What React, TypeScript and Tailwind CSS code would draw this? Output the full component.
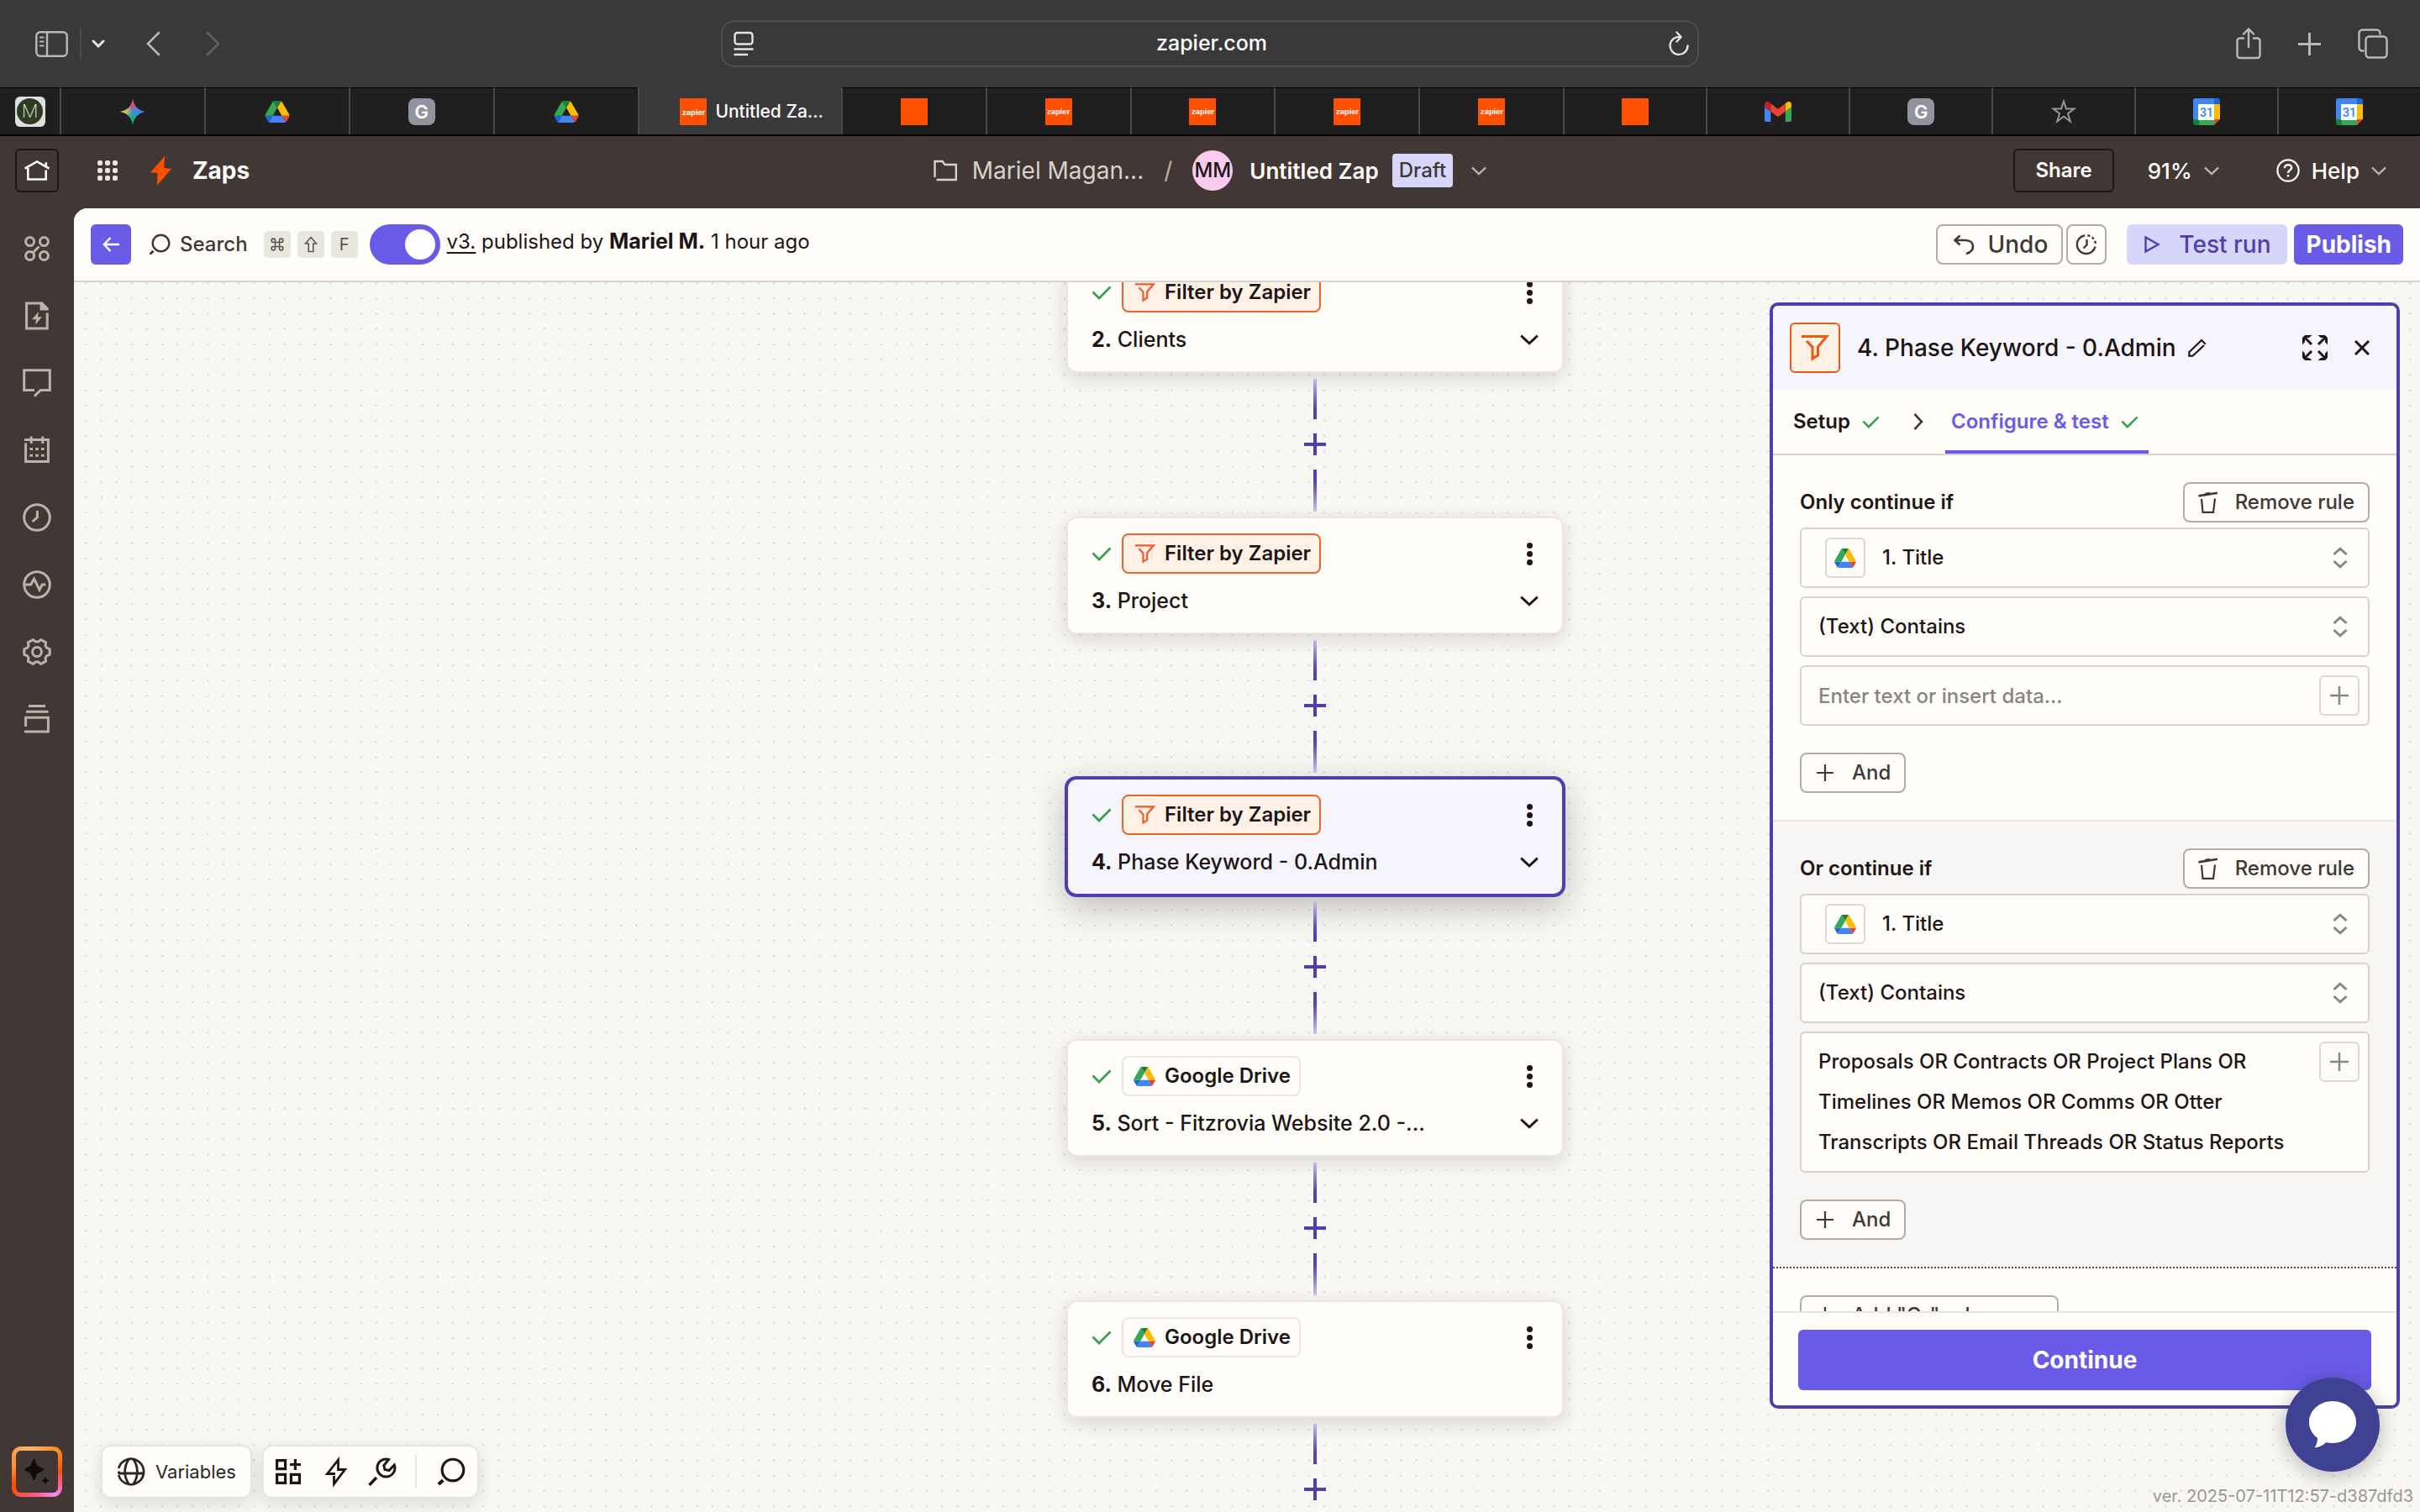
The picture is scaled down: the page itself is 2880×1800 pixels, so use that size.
import React from "react";

type IconProps = { className?: string };

/* ---------- icons ---------- */

const stroke = {
  fill: "none",
  stroke: "currentColor",
  strokeLinecap: "butt" as const,
  strokeLinejoin: "miter" as const,
};

function DriveIcon({ className = "" }: IconProps) {
  return (
    <svg viewBox="0 0 87.3 78" className={className} aria-hidden="true">
      <path d="m6.6 66.85 3.85 6.65c.8 1.4 1.95 2.5 3.3 3.3l13.75-23.8h-27.5c0 1.55.4 3.1 1.2 4.5z" fill="#1c67d6" />
      <path d="m43.65 25-13.75-23.8c-1.35.8-2.5 1.9-3.3 3.3l-25.4 44a9.06 9.06 0 0 0 -1.2 4.5h27.5z" fill="#34a853" />
      <path d="m73.55 76.8c1.35-.8 2.5-1.9 3.3-3.3l1.6-2.75 7.65-13.25c.8-1.4 1.2-2.95 1.2-4.5h-27.502l5.852 11.5z" fill="#ea4335" />
      <path d="m43.65 25 13.75-23.8c-1.35-.8-2.9-1.2-4.5-1.2h-18.5c-1.6 0-3.15.45-4.5 1.2z" fill="#188038" />
      <path d="m59.8 53h-32.3l-13.75 23.8c1.35.8 2.9 1.2 4.5 1.2h50.8c1.6 0 3.15-.45 4.5-1.2z" fill="#4285f4" />
      <path d="m73.4 26.5-12.7-22c-.8-1.4-1.95-2.5-3.3-3.3l-13.75 23.8 16.15 28h27.45c0-1.55-.4-3.1-1.2-4.5z" fill="#fbbc04" />
    </svg>
  );
}

function GmailIcon() {
  return (
    <svg viewBox="52 42 88 66" className="h-6 w-8" aria-hidden="true">
      <path fill="#4285f4" d="M58 108h14V74L52 59v43c0 3.32 2.69 6 6 6" />
      <path fill="#34a853" d="M120 108h14c3.32 0 6-2.69 6-6V59l-20 15" />
      <path fill="#fbbc04" d="M120 48v26l20-15v-8c0-7.42-8.47-11.65-14.4-7.2" />
      <path fill="#ea4335" d="M72 74V48l24 18 24-18v26L96 92" />
      <path fill="#c5221f" d="M52 51v8l20 15V48l-5.6-4.2c-5.94-4.45-14.4-.22-14.4 7.2" />
    </svg>
  );
}

function GeminiIcon() {
  return (
    <svg viewBox="0 0 30 30" className="size-[30px]" aria-hidden="true">
      <defs>
        <radialGradient id="gemTop" cx="0.5" cy="0" r="0.5">
          <stop offset="0" stopColor="#f0484a" />
          <stop offset="0.5" stopColor="#f0484a" stopOpacity="0.9" />
          <stop offset="1" stopColor="#f0484a" stopOpacity="0" />
        </radialGradient>
        <radialGradient id="gemLeft" cx="0" cy="0.5" r="0.5">
          <stop offset="0" stopColor="#fbc02d" />
          <stop offset="0.5" stopColor="#fbc02d" stopOpacity="0.9" />
          <stop offset="1" stopColor="#fbc02d" stopOpacity="0" />
        </radialGradient>
        <radialGradient id="gemBottom" cx="0.45" cy="1" r="0.55">
          <stop offset="0" stopColor="#12b868" />
          <stop offset="0.5" stopColor="#12b868" stopOpacity="0.9" />
          <stop offset="1" stopColor="#12b868" stopOpacity="0" />
        </radialGradient>
      </defs>
      {["#3a86ff", "url(#gemTop)", "url(#gemLeft)", "url(#gemBottom)"].map((fill) => (
        <path key={fill} fill={fill} d="M15 0C16.5 8.500 21.500 13.500 30 15C21.500 16.500 16.500 21.500 15 30C13.500 21.500 8.500 16.500 0 15C8.500 13.500 13.500 8.500 15 0Z" />
      ))}
    </svg>
  );
}

function GoogleCalendarIcon() {
  return (
    <svg viewBox="0 0 32 32" className="size-8" aria-hidden="true">
      <path fill="#4285f4" d="M3 0H25V7H7V26H0V3A3 3 0 0 1 3 0Z" />
      <path fill="#1967d2" d="M25 0H29A3 3 0 0 1 32 3V7H25Z" />
      <path fill="#fbbc04" d="M25 7H32V25H25Z" />
      <path fill="#34a853" d="M7 25H25V32H7Z" />
      <path fill="#188038" d="M0 25H7V32H3A3 3 0 0 1 0 29Z" />
      <path fill="#ea4335" d="M25 25H32L25 32Z" />
      <path fill="#fff" d="M6 7H25V26H6Z" />
      <text x="16" y="22" textAnchor="middle" fontSize="14" fontWeight="600" fill="#4285f4" fontFamily="Roboto, sans-serif">
        31
      </text>
    </svg>
  );
}

function ZapierFavicon({ plain = false }: { plain?: boolean }) {
  return (
    <span className="flex size-8 shrink-0 items-center justify-center bg-[#ff4f00] text-[9px] font-bold leading-none text-white">
      {plain ? "" : "zapier"}
    </span>
  );
}

function GFavicon() {
  return (
    <span className="flex size-8 items-center justify-center rounded-lg bg-[#93939f] text-[22px] font-semibold leading-none text-white">
      G
    </span>
  );
}

function StarIcon() {
  return (
    <svg viewBox="0 0 30 30" className="size-[30px] text-[#98989a]" aria-hidden="true">
      <path {...stroke} strokeWidth="2" d="M15 2.5L18 11.5H27.5L20 17.2L22.8 26.5L15 20.8L7.2 26.5L10 17.2L2.5 11.5H12Z" />
    </svg>
  );
}

function FunnelIcon({ className = "" }: IconProps) {
  return (
    <svg viewBox="0 0 33 31" className={className} aria-hidden="true">
      <path {...stroke} strokeWidth="3" d="M0 1.5H30L19.5 13.7V24L13 28V14L6 7" />
    </svg>
  );
}

function CheckIcon({ className = "" }: IconProps) {
  return (
    <svg viewBox="0 0 24 17" className={className} aria-hidden="true">
      <path {...stroke} strokeWidth="2.8" d="M1.5 7.5L9 15L22.5 1.5" />
    </svg>
  );
}

function ChevronDown({ className = "" }: IconProps) {
  return (
    <svg viewBox="0 0 20 12" className={className} aria-hidden="true">
      <path {...stroke} strokeWidth="2.6" d="M1 1.5L10 10L19 1.5" />
    </svg>
  );
}

function PlusIcon({ className = "" }: IconProps) {
  return (
    <svg viewBox="0 0 20 20" className={className} aria-hidden="true">
      <path {...stroke} strokeWidth="2.2" d="M10 0V20M0 10H20" />
    </svg>
  );
}

function SearchIcon({ className = "" }: IconProps) {
  return (
    <svg viewBox="0 0 26 26" className={className} aria-hidden="true">
      <circle {...stroke} strokeWidth="2.4" cx="14.5" cy="11.5" r="9.8" />
      <path {...stroke} strokeWidth="3" d="M1.5 24.5L5.5 20.8" />
    </svg>
  );
}

function SortIcon() {
  return (
    <svg viewBox="0 0 18 26" className="h-[26px] w-[18px] shrink-0 text-[#88857f]" aria-hidden="true">
      <path {...stroke} strokeWidth="3" d="M1.5 9L9 2.2L16.5 9M1.5 17L9 23.8L16.5 17" />
    </svg>
  );
}

function TrashIcon() {
  return (
    <svg viewBox="0 0 24 27" className="h-[27px] w-6" aria-hidden="true">
      <path {...stroke} strokeWidth="2.2" d="M4 9L5.5 24.8H18L20 8.5" />
      <path {...stroke} strokeWidth="2.6" d="M.5 5.4L23 1.8" />
      <path {...stroke} strokeWidth="2" d="M8 3L14 1.6" />
    </svg>
  );
}

function HomeIcon() {
  return (
    <svg viewBox="0 0 30 26" className="h-[26px] w-[30px]" aria-hidden="true">
      <path {...stroke} strokeWidth="2.6" d="M.5 10.5L15 2.4L29.5 10.5M25.8 9V3.2M4.3 10V23.5H25.7V12.5" />
    </svg>
  );
}

function gearPath() {
  const points: string[] = [];
  for (let i = 0; i < 6; i++) {
    const base = i * 60;
    for (const [angle, radius] of [
      [base - 13, 15.6],
      [base + 13, 15.6],
      [base + 22, 12.6],
      [base + 38, 12.6],
    ]) {
      const rad = (angle * Math.PI) / 180;
      points.push(`${(18 + radius * Math.cos(rad)).toFixed(2)} ${(18 + radius * Math.sin(rad) * 0.97).toFixed(2)}`);
    }
  }
  return `M${points.join("L")}Z`;
}

/* ---------- browser chrome ---------- */

function BrowserBar() {
  return (
    <div className="grid h-26 shrink-0 grid-cols-[1fr_1164px_1fr] items-center bg-[#393939] text-[#b9b9b9]">
      <div className="flex items-center pl-[42px]">
        <button aria-label="Show sidebar">
          <svg viewBox="0 0 39 31" className="h-[31px] w-[39px]" aria-hidden="true">
            <rect {...stroke} strokeWidth="2.4" x="1.3" y="1.3" width="36.4" height="28.4" rx="4.5" />
            <path {...stroke} strokeWidth="2.4" d="M14 1V30" />
            <path {...stroke} strokeWidth="1.8" d="M5 7.5H10.5M5 12.5H10.5M5 17.5H10.5" />
          </svg>
        </button>
        <span className="ml-3.5 h-9 w-0.5 bg-[#4c4c4c]" />
        <button aria-label="Tab groups" className="ml-3 text-[#e2e2e2]">
          <svg viewBox="0 0 16 10" className="h-2.5 w-4" aria-hidden="true">
            <path {...stroke} strokeWidth="3" strokeLinecap="round" d="M2 2L8 8L14 2" />
          </svg>
        </button>
        <button aria-label="Back" className="ml-12">
          <svg viewBox="0 0 18 30" className="h-[30px] w-[18px]" aria-hidden="true">
            <path {...stroke} strokeWidth="2.6" strokeLinecap="round" d="M16 2L3 15L16 28" />
          </svg>
        </button>
        <button aria-label="Forward" className="ml-[54px] text-[#626262]">
          <svg viewBox="0 0 18 30" className="h-[30px] w-[18px]" aria-hidden="true">
            <path {...stroke} strokeWidth="2.6" strokeLinecap="round" d="M2 2L15 15L2 28" />
          </svg>
        </button>
      </div>
      <div className="flex h-14 items-center rounded-2xl border-2 border-[#505050] pr-2.5 pl-3 text-[#e4e4e4]">
        <button aria-label="Page menu">
          <svg viewBox="0 0 26 30" className="h-[30px] w-[26px]" aria-hidden="true">
            <rect {...stroke} strokeWidth="2.4" x="2.5" y="2" width="21" height="13.5" rx="3" />
            <path {...stroke} strokeWidth="2.4" d="M1.5 21.5H24.5M1.5 28H18" />
          </svg>
        </button>
        <input
          aria-label="Address"
          defaultValue="zapier.com"
          className="min-w-0 flex-1 bg-transparent text-center text-[25px] font-medium text-white outline-none"
        />
        <button aria-label="Reload">
          <svg viewBox="0 0 24 30" className="h-[30px] w-6" aria-hidden="true">
            <path {...stroke} strokeWidth="2.4" strokeLinecap="round" d="M13.5 7A10.5 10.5 0 1 0 22.5 17.5M9.5 1.5L14.5 7L9.5 12.5" />
          </svg>
        </button>
      </div>
      <div className="flex items-center justify-end gap-11 pr-[38px]">
        <button aria-label="Share page">
          <svg viewBox="0 0 30 38" className="h-[38px] w-[30px]" aria-hidden="true">
            <path {...stroke} strokeWidth="2.4" strokeLinecap="round" d="M9 12.5H4.5A3 3 0 0 0 1.5 15.5V33A3 3 0 0 0 4.5 36H25.5A3 3 0 0 0 28.5 33V15.5A3 3 0 0 0 25.5 12.5H21M15 23V2M9 7.5L15 1.5L21 7.5" />
          </svg>
        </button>
        <button aria-label="New tab">
          <PlusIcon className="size-[27px]" />
        </button>
        <button aria-label="Tab overview">
          <svg viewBox="0 0 36 36" className="size-9" aria-hidden="true">
            <rect {...stroke} strokeWidth="2.4" x="9.5" y="9.5" width="25" height="25" rx="4" />
            <path {...stroke} strokeWidth="2.4" d="M7.5 26.5H5.5A4 4 0 0 1 1.5 22.5V5.5A4 4 0 0 1 5.5 1.5H22.5A4 4 0 0 1 26.5 5.5V7.5" />
          </svg>
        </button>
      </div>
    </div>
  );
}

type Tab = { name: string; icon: React.ReactNode; narrow?: boolean };

const tabs: Tab[] = [
  { name: "Gemini", icon: <GeminiIcon /> },
  { name: "Drive", icon: <DriveIcon className="h-[26px] w-[30px]" /> },
  { name: "G page", icon: <GFavicon /> },
  { name: "Drive folder", icon: <DriveIcon className="h-[26px] w-[30px]" /> },
  { name: "active", icon: <ZapierFavicon /> },
  { name: "Zapier loading", icon: <ZapierFavicon plain /> },
  { name: "Zapier 1", icon: <ZapierFavicon /> },
  { name: "Zapier 2", icon: <ZapierFavicon /> },
  { name: "Zapier 3", icon: <ZapierFavicon /> },
  { name: "Zapier 4", icon: <ZapierFavicon /> },
  { name: "Zapier home", icon: <ZapierFavicon plain />, narrow: true },
  { name: "Gmail", icon: <GmailIcon />, narrow: true },
  { name: "G page 2", icon: <GFavicon />, narrow: true },
  { name: "Favourites", icon: <StarIcon />, narrow: true },
  { name: "Calendar", icon: <GoogleCalendarIcon />, narrow: true },
  { name: "Calendar week", icon: <GoogleCalendarIcon />, narrow: true },
];

function TabStrip() {
  return (
    <div className="flex h-[58px] shrink-0 border-b-2 border-black bg-[#1f1f1f]">
      <button aria-label="Pinned tab" className="flex w-[71px] items-center justify-center border-t border-black">
        <span className="flex size-9 items-center justify-center rounded-md bg-[#dedede]">
          <span className="flex size-[31px] items-center justify-center rounded-full bg-[#2c3b22] text-[22px] font-extralight text-[#dfe3d8]">
            M
          </span>
        </span>
      </button>
      {tabs.map((tab) =>
        tab.name === "active" ? (
          <button
            key={tab.name}
            className="flex w-[242px] items-center justify-center gap-2.5 border-l-2 border-[#4a4a4a] bg-[#393939] pt-0.5 pl-7 text-[21px] font-medium whitespace-nowrap text-white"
          >
            {tab.icon}
            Untitled Za...
          </button>
        ) : (
          <button
            key={tab.name}
            aria-label={tab.name}
            className={
              "flex items-center justify-center border-t border-l-2 border-t-black border-l-[#4a4a4a] " +
              (tab.narrow ? "flex-[170]" : "flex-[172]")
            }
          >
            {tab.icon}
          </button>
        ),
      )}
    </div>
  );
}

/* ---------- app header ---------- */

function AppHeader() {
  return (
    <header className="grid h-[86px] shrink-0 grid-cols-[1fr_auto_1fr] items-center pb-1 text-[#fffefb]">
      <div className="flex items-center pl-[18px]">
        <button aria-label="Home" className="flex size-13 items-center justify-center rounded-md border-2 border-[#201515]">
          <HomeIcon />
        </button>
        <button aria-label="Products" className="ml-[46px] grid grid-cols-3 gap-[3px]">
          {Array.from({ length: 9 }, (_, i) => (
            <span key={i} className="size-1.5 rounded-[2px] bg-[#e8e7dd]" />
          ))}
        </button>
        <svg viewBox="0 0 26 35" className="ml-[39px] h-[35px] w-[26px]" aria-hidden="true">
          <path fill="#ff4f00" d="M17 0L16.3 14L25 15L8 34.5L8.5 20L0 19.3Z" />
        </svg>
        <h1 className="ml-6 text-[28px] font-bold">Zaps</h1>
      </div>
      <div className="flex items-center text-[26px]">
        <svg viewBox="0 0 28 26" className="h-[26px] w-7 text-[#d7d3c9]" aria-hidden="true">
          <path {...stroke} strokeWidth="2.4" d="M1.5 21V2H10.5L13.5 6H26.8V24H3.5" />
        </svg>
        <a href="#folder" className="ml-[18px] text-[28px] text-[#d7d3c9]">
          Mariel Magan...
        </a>
        <span className="ml-6 text-[28px] text-[#b8b3aa]">/</span>
        <span className="ml-6 flex size-12 items-center justify-center rounded-full bg-[#fccbf0] text-[24px] font-medium text-[#201515]">
          MM
        </span>
        <span className="ml-5 font-semibold">Untitled Zap</span>
        <span className="ml-4 flex h-10 items-center rounded-[4px] bg-[#d6d7fb] px-2 text-[24px] font-medium text-[#413735]">
          Draft
        </span>
        <button aria-label="Zap menu" className="ml-[22px] text-[#b8b3aa]">
          <ChevronDown className="h-[11px] w-[18px]" />
        </button>
      </div>
      <div className="flex items-center justify-end pr-10 text-[26px] font-medium">
        <button className="h-13 rounded-md border-2 border-[#201515] px-6 text-[24px] font-semibold">Share</button>
        <button className="ml-10 flex items-center gap-3.5">
          91%
          <ChevronDown className="h-[11px] w-[18px] text-[#b8b3aa]" />
        </button>
        <button className="ml-[68px] flex items-center gap-3.5">
          <svg viewBox="0 0 28 28" className="size-7" aria-hidden="true">
            <circle {...stroke} strokeWidth="2.2" cx="14" cy="14" r="12.6" />
            <path {...stroke} strokeWidth="2.4" d="M9.8 11.2C9.8 6 18.4 6 18.2 10.8C18 13.6 14 13.4 14 17M14 19V21.6" />
          </svg>
          Help
          <ChevronDown className="h-[11px] w-[18px] text-[#b8b3aa]" />
        </button>
      </div>
    </header>
  );
}

/* ---------- side rail ---------- */

const railIcons: { name: string; art: React.ReactNode }[] = [
  {
    name: "Apps",
    art: (
      <>
        <circle cx="9.6" cy="9.6" r="5" />
        <circle cx="26.4" cy="9.6" r="5" />
        <circle cx="9.6" cy="26.4" r="5" />
        <circle cx="26.4" cy="26.4" r="5" />
        <path d="M13 23L20.5 15.5" />
      </>
    ),
  },
  {
    name: "Templates",
    art: (
      <>
        <path d="M23 3H5.6V33H30.2V14.5" />
        <path fill="currentColor" stroke="none" d="M21.6 1.4H24.5L31.8 9V11.6H21.6Z" />
        <path fill="currentColor" stroke="none" d="M20 13L12 22.3H17L16 28.5L24 19.2H19Z" />
      </>
    ),
  },
  { name: "Chat", art: <path d="M15 26.4H2.7V2.7H33.3V26.4H22.3L15 33.6" /> },
  {
    name: "Calendar",
    art: (
      <>
        <path d="M3 5.6H31.4V31.4H4.6V9.5M11.2 1.4V10M24.8 1.4V10" />
        <path strokeDasharray="3.6 3.2" d="M9.4 16.4H27M9.4 24.2H27" />
      </>
    ),
  },
  {
    name: "History",
    art: (
      <>
        <circle cx="18" cy="18" r="15.3" />
        <path d="M18.4 10V17.8L12.6 23" />
      </>
    ),
  },
  {
    name: "Activity",
    art: (
      <>
        <circle cx="18" cy="18" r="15.3" />
        <path d="M4 18H10.6L14.6 11.2L21 24.2L24.2 18H28.4" />
      </>
    ),
  },
  {
    name: "Settings",
    art: (
      <>
        <path strokeLinejoin="round" d={gearPath()} />
        <circle cx="18" cy="18" r="5.4" />
      </>
    ),
  },
  { name: "Versions", art: <path d="M8 2.6H28M5 9.2H31.6M4.6 27V16.2H31.4V33H3" /> },
];

function SideRail() {
  return (
    <nav aria-label="Main" className="flex w-22 shrink-0 flex-col items-center justify-between pt-[30px] pb-[18px]">
      <ul className="flex flex-col gap-11 text-[#b9b3aa]">
        {railIcons.map((icon) => (
          <li key={icon.name} className="flex">
            <button aria-label={icon.name}>
              <svg viewBox="0 0 36 36" className="size-9" aria-hidden="true">
                <g {...stroke} strokeWidth="3">
                  {icon.art}
                </g>
              </svg>
            </button>
          </li>
        ))}
      </ul>
      <button
        aria-label="Copilot"
        className="size-15 rounded-[11px] bg-[conic-gradient(from_45deg,#ff8a1f,#ff4f00_12%,#ff5a8a_20%,#f48be6_27%,#ff5a8a_38%,#ff4f00_55%,#ff8a3c_65%,#ffb46b_84%,#ff8a1f)] p-[5px]"
      >
        <span className="flex size-full items-center justify-center rounded-md bg-[#413735]">
          <svg viewBox="0 0 36 36" className="size-9" aria-hidden="true">
            <path fill="#110c0c" stroke="#110c0c" strokeWidth="2" strokeLinejoin="round" d="M14.500 4L17.500 11.500L25.500 15.500L17.500 19.500L14.500 27L11 19.500L4 15.500L11 11.500Z" />
            <path fill="#110c0c" d="M28 23.500L29.500 27L33 28.500L29.500 30L28 33.500L26.500 30L23 28.500L26.500 27Z" />
          </svg>
        </span>
      </button>
    </nav>
  );
}

/* ---------- editor toolbar ---------- */

const keyCap = "flex size-8 items-center justify-center rounded-[5px] bg-[#e8e7dd] font-[inherit]";

function EditorToolbar() {
  return (
    <div className="flex h-22 shrink-0 items-center border-b-2 border-[#d7d4c8] bg-[#fffefb] px-5 text-[24px] text-[#201515]">
      <button aria-label="Back to Zaps" className="flex size-12 items-center justify-center rounded-md bg-[#695be8] text-white">
        <svg viewBox="0 0 20 18" className="h-[18px] w-5" aria-hidden="true">
          <path {...stroke} strokeWidth="2.4" d="M9.500 1L1.800 9L9.500 17M1.500 9H20" />
        </svg>
      </button>
      <button className="ml-[21px] flex items-center text-[#413735]">
        <SearchIcon className="size-[26px]" />
        <span className="ml-[11px] font-medium">Search</span>
        <span className="ml-[19px] flex gap-2 text-[20px] text-[#5d5551]">
          <kbd className={keyCap}>
            <svg viewBox="0 0 16 16" className="size-4" aria-hidden="true">
              <path {...stroke} strokeWidth="1.600" d="M5.500 5.500V3.200A2.200 2.200 0 1 0 3.200 5.500H12.800A2.200 2.200 0 1 0 10.500 3.200V12.800A2.200 2.200 0 1 0 12.800 10.500H3.200A2.200 2.200 0 1 0 5.500 12.800Z" />
            </svg>
          </kbd>
          <kbd className={keyCap}>
            <svg viewBox="0 0 16 20" className="h-5 w-4" aria-hidden="true">
              <path {...stroke} strokeWidth="1.600" d="M8 1.500L14.500 9H10.800V18.500H5.200V9H1.500Z" />
            </svg>
          </kbd>
          <kbd className={keyCap}>F</kbd>
        </span>
      </button>
      <input
        type="checkbox"
        role="switch"
        aria-label="Zap is on"
        defaultChecked
        className="ml-3.5 flex h-12 w-21 appearance-none items-center rounded-full bg-[#b8b3aa] p-1.5 before:size-9 before:rounded-full before:bg-white checked:justify-end checked:bg-[#695be8]"
      />
      <p className="ml-2 pb-1.5">
        <a href="#version" className="underline underline-offset-4">
          v3.
        </a>{" "}
        published by <strong className="text-[25px] font-bold">Mariel M.</strong> 1 hour ago
      </p>
      <div className="ml-auto flex items-center text-[28px] font-medium">
        <button className="flex h-12 items-center gap-4 rounded-lg border-2 border-[#b0ada6] pr-4 pl-[18px] text-[#413735]">
          <svg viewBox="0 0 26 26" className="size-[26px]" aria-hidden="true">
            <path {...stroke} strokeWidth="2.600" d="M8.500 2.500L2.500 8L8.500 13.500M2.500 8H15C21 8 24 11.500 24 15.500S21 22.500 16 24" />
          </svg>
          Undo
        </button>
        <button aria-label="Version history" className="ml-1 flex size-12 items-center justify-center rounded-lg border-2 border-[#b0ada6] text-[#413735]">
          <svg viewBox="0 0 26 26" className="size-[26px]" aria-hidden="true">
            <path {...stroke} strokeWidth="2.400" d="M11 2.200A11 11 0 1 0 23.500 15.500M13.500 7V13.500L9.500 17.500" />
            <path {...stroke} strokeWidth="2.400" strokeDasharray="3 2.600" d="M14.500 2.200A11 11 0 0 1 23.800 13" />
          </svg>
        </button>
        <button className="ml-6 flex h-12 items-center gap-[22px] rounded-md bg-[#d6d6fb] px-5 text-[#503eb0]">
          <svg viewBox="0 0 20 22" className="h-[22px] w-5" aria-hidden="true">
            <path {...stroke} strokeWidth="2.400" d="M2.500 2.500V19.500L17.500 11Z" />
          </svg>
          Test run
        </button>
        <button className="ml-2 h-12 rounded-md bg-[#695be8] px-3.5 font-bold text-white">Publish</button>
      </div>
    </div>
  );
}

/* ---------- canvas ---------- */

const ZOOM = 0.91;

function DotGrid() {
  return (
    <svg className="absolute inset-0 size-full" aria-hidden="true">
      <defs>
        <pattern id="dots" width="20" height="20" patternUnits="userSpaceOnUse" patternTransform={`translate(5 -8) scale(${ZOOM})`}>
          <circle cx="10" cy="10" r="1.15" fill="#c9c6bc" />
        </pattern>
      </defs>
      <rect width="100%" height="100%" fill="url(#dots)" />
    </svg>
  );
}

type Step = { n: number; title: string; app: "filter" | "drive"; expandable?: boolean; selected?: boolean };

const steps: Step[] = [
  { n: 2, title: "Clients", app: "filter", expandable: true },
  { n: 3, title: "Project", app: "filter", expandable: true },
  { n: 4, title: "Phase Keyword - 0.Admin", app: "filter", expandable: true, selected: true },
  { n: 5, title: "Sort - Fitzrovia Website 2.0 -...", app: "drive", expandable: true },
  { n: 6, title: "Move File", app: "drive" },
];

function StepCard({ step }: { step: Step }) {
  return (
    <article
      className={
        step.selected
          ? "h-35 w-full rounded-xl border-2 border-[#503eb0] bg-[#f6f4fd] px-7 pt-[18px] shadow-[0_12px_40px_rgba(32,21,21,0.28)] ring-2 ring-[#503eb0]"
          : "h-35 w-full rounded-xl border-2 border-[#e9e7de] bg-[#fffefb] px-7 pt-[18px] shadow-[0_6px_22px_rgba(32,21,21,0.14)]"
      }
    >
      <div className="flex items-center">
        <CheckIcon className="h-[17px] w-6 text-[#37a04e]" />
        <span
          className={
            step.app === "filter"
              ? "ml-3 flex h-12 items-center rounded-lg border-2 border-[#e8672c] bg-[#fff1e6] pr-2.5 pl-3.5"
              : "ml-3 flex h-12 items-center rounded-lg border-2 border-[#ebe9df] bg-[#fffefb] pr-2.5 pl-3"
          }
        >
          {step.app === "filter" ? (
            <FunnelIcon className="h-[23px] w-6 text-[#f0592a]" />
          ) : (
            <DriveIcon className="h-[23px] w-[26px]" />
          )}
          <span className="ml-[11px] text-[24px] font-semibold">{step.app === "filter" ? "Filter by Zapier" : "Google Drive"}</span>
        </span>
        <button aria-label="Step menu" className="ml-auto flex w-[22px] flex-col items-center gap-[3px]">
          <span className="size-[7px] rounded-full bg-[#201515]" />
          <span className="size-[7px] rounded-full bg-[#201515]" />
          <span className="size-[7px] rounded-full bg-[#201515]" />
        </button>
      </div>
      <div className="mt-3.5 flex items-center">
        <h2 className="text-[25px] leading-9 font-medium">
          <span className="font-bold">{step.n}.</span> {step.title}
        </h2>
        {step.expandable && (
          <button aria-label="Expand step" className="ml-auto">
            <ChevronDown className="h-[13px] w-[22px]" />
          </button>
        )}
      </div>
    </article>
  );
}

function Connector() {
  return (
    <div className="flex flex-col items-center pt-[7px] pb-1.5 text-[#503eb0]">
      <span className="h-12 w-1 bg-linear-to-b from-[#c2bbea] via-[#5747b4] via-70% to-[#503eb0]" />
      <button aria-label="Add step" className="my-[17px]">
        <svg viewBox="0 0 26 26" className="size-[26px]" aria-hidden="true">
          <path {...stroke} strokeWidth="4" d="M13 0V26M0 13H26" />
        </svg>
      </button>
      <span className="h-[50px] w-1 bg-linear-to-t from-[#c9c3ee] via-[#5747b4] via-70% to-[#503eb0]" />
    </div>
  );
}

/* ---------- details panel ---------- */

function IconTile({ children, className = "" }: { children: React.ReactNode; className?: string }) {
  return (
    <span className={"flex size-12 shrink-0 items-center justify-center rounded-md border-2 border-[#dcdad0] bg-[#fffefb] " + className}>
      {children}
    </span>
  );
}

function OutlineButton({ children, className = "" }: { children: React.ReactNode; className?: string }) {
  return (
    <button
      className={
        "flex h-12 items-center rounded-lg border-2 border-[#b0ada6] bg-[#fffefb] text-[24px] font-medium text-[#413735] " + className
      }
    >
      {children}
    </button>
  );
}

const fieldBox = "flex rounded-md border-2 border-[#d7d4c8] bg-[#fffefb] text-[24px] font-medium";

function InsertButton() {
  return (
    <button aria-label="Insert data" className="text-[#88857f]">
      <IconTile>
        <PlusIcon className="size-[22px]" />
      </IconTile>
    </button>
  );
}

function RuleGroup({ id, heading, value, className }: { id: string; heading: string; value?: string; className: string }) {
  return (
    <section className={"px-8 pt-8 pb-8 " + className}>
      <div className="flex items-center justify-between">
        <label htmlFor={id} className="text-[24px] font-semibold">
          {heading}
        </label>
        <OutlineButton className="gap-5 pr-4 pl-4">
          <TrashIcon />
          Remove rule
        </OutlineButton>
      </div>
      <div className="mt-1.5 flex flex-col gap-2.5">
        <div className={fieldBox + " h-18 items-center pr-6 pl-7"}>
          <IconTile>
            <DriveIcon className="h-[23px] w-[26px]" />
          </IconTile>
          <select id={id} className="ml-5 h-full min-w-0 flex-1 appearance-none bg-transparent outline-none">
            <option>1. Title</option>
          </select>
          <SortIcon />
        </div>
        <div className={fieldBox + " h-18 items-center pr-6 pl-5"}>
          <select aria-label="Condition" className="h-full min-w-0 flex-1 appearance-none bg-transparent outline-none">
            <option>(Text) Contains</option>
          </select>
          <SortIcon />
        </div>
        <div className={fieldBox + " items-start py-2.5 pr-2.5 pl-5"}>
          {value ? (
            <textarea
              aria-label="Value"
              rows={3}
              defaultValue={value}
              className="min-w-0 flex-1 resize-none overflow-hidden bg-transparent leading-12 outline-none"
            />
          ) : (
            <input
              aria-label="Value"
              placeholder="Enter text or insert data..."
              className="h-12 min-w-0 flex-1 bg-transparent outline-none placeholder:text-[#88857f]"
            />
          )}
          <InsertButton />
        </div>
      </div>
      <OutlineButton className="mt-8 gap-[22px] pr-4 pl-[18px]">
        <PlusIcon className="size-5" />
        And
      </OutlineButton>
    </section>
  );
}

function StepPanel() {
  return (
    <aside className="relative mt-6 mr-6 mb-[123px] flex w-[750px] shrink-0 flex-col overflow-hidden rounded-[10px] border-4 border-[#503eb0] bg-[#fffefb]">
      <div className="flex h-25 shrink-0 items-center bg-[#f6f4fd] pr-8 pl-5">
        <span className="flex size-15 items-center justify-center rounded-md border-2 border-[#ec5a1b] bg-[#fff1e6] text-[#f2560d]">
          <FunnelIcon className="h-[31px] w-[33px]" />
        </span>
        <h2 className="ml-5 text-[28px] font-medium">4. Phase Keyword - 0.Admin</h2>
        <button aria-label="Rename step" className="ml-3.5">
          <svg viewBox="0 0 22 22" className="size-[22px]" aria-hidden="true">
            <path {...stroke} strokeWidth="2.200" d="M20.800 6.800L16 2L1.300 16.300V20.700H5.500L19 8" />
          </svg>
        </button>
        <button aria-label="Full screen" className="ml-auto">
          <svg viewBox="0 0 30 30" className="size-[30px]" aria-hidden="true">
            <path fill="currentColor" d="M0 0H11.500L8 3H0ZM0 0V11.500L3 8V0ZM30 0H18.500L22 3H30ZM30 0V11.500L27 8V0ZM0 30H11.500L8 27H0ZM0 30V18.500L3 22V30ZM30 30H18.500L22 27H30ZM30 30V18.500L27 22V30Z" />
            <path {...stroke} strokeWidth="3" d="M1.500 1.500L11 11M28.500 1.500L19 11M1.500 28.500L11 19M28.500 28.500L19 19" />
          </svg>
        </button>
        <button aria-label="Close panel" className="ml-8">
          <svg viewBox="0 0 18 18" className="size-[18px]" aria-hidden="true">
            <path {...stroke} strokeWidth="3" d="M1 1L17 17M17 1L1 17" />
          </svg>
        </button>
      </div>
      <div className="flex h-[78px] shrink-0 border-b-2 border-[#d7d4c8] pl-6 text-[24px] font-semibold">
        <button className="flex items-center gap-3.5">
          Setup
          <CheckIcon className="h-[15px] w-[21px] text-[#37a04e]" />
        </button>
        <span className="mr-[26px] ml-10 flex items-center text-[#413735]">
          <svg viewBox="0 0 12 20" className="h-5 w-3" aria-hidden="true">
            <path {...stroke} strokeWidth="2.600" d="M1.500 1L10 10L1.500 19" />
          </svg>
        </span>
        <button className="flex items-center gap-3.5 border-b-4 border-[#695be8] pt-1 pr-3 pl-[7px] text-[#695be8]">
          Configure &amp; test
          <CheckIcon className="h-[15px] w-[21px] text-[#37a04e]" />
        </button>
      </div>
      <div className="min-h-0 flex-1 overflow-hidden">
        <RuleGroup id="rule-one" heading="Only continue if" className="bg-[#fffefb]" />
        <RuleGroup
          id="rule-two"
          heading="Or continue if"
          value="Proposals OR Contracts OR Project Plans OR Timelines OR Memos OR Comms OR Otter Transcripts OR Email Threads OR Status Reports"
          className="border-t-2 border-[#ebe9df] bg-[#f7f6f4]"
        />
        <div className="border-t-2 border-dotted border-[#55504c] px-8 pt-8">
          <OutlineButton className="gap-[22px] pr-4 pl-[18px]">
            <PlusIcon className="size-5" />
            Add "Or" rule group
          </OutlineButton>
        </div>
      </div>
      <div className="shrink-0 border-t-2 border-[#e8e7dd] bg-[#fffefb] px-[30px] pt-5 pb-[18px]">
        <button className="h-18 w-full rounded-md bg-[#695be8] text-[28px] font-bold text-white">Continue</button>
      </div>
    </aside>
  );
}

/* ---------- floating controls ---------- */

const floatBox = "flex h-16 items-center rounded-xl border-2 border-[#e8e7dd] bg-[#fffefb] shadow-[0_6px_20px_rgba(32,21,21,0.12)]";

function CanvasControls() {
  return (
    <div className="absolute bottom-4 left-8 flex gap-3">
      <button className={floatBox + " gap-3 px-[17px] text-[22px] text-[#2d2626]"}>
        <svg viewBox="0 0 34 34" className="size-[34px]" aria-hidden="true">
          <g {...stroke} strokeWidth="2.800">
            <path d="M2.200 13A15.200 15.200 0 1 1 2.200 21M2 19H32" />
            <path d="M14.500 2C8 11 8 23 14.500 32M19.500 2C26 11 26 23 19.500 32M1 17.800H4" />
          </g>
        </svg>
        Variables
      </button>
      <div className={floatBox + " px-3.5"}>
        <button aria-label="Add app">
          <svg viewBox="0 0 30 30" className="size-[30px]" aria-hidden="true">
            <path {...stroke} strokeWidth="3.200" d="M1.600 1.600H11.600V11.600H1.600ZM1.600 18.400H11.600V28.400H1.600ZM18.400 18.400H28.400V28.400H18.400ZM23.400 0V13M17 6.500H30" />
          </svg>
        </button>
        <button aria-label="Zap runs" className="ml-7">
          <svg viewBox="0 0 28 38" className="h-[38px] w-7" aria-hidden="true">
            <path {...stroke} strokeWidth="2.800" d="M13 21.500H3.500L16.500 5V16.500H24.500L11.500 33.500V24" />
          </svg>
        </button>
        <button aria-label="Tools" className="ml-6">
          <svg viewBox="0 0 34 34" className="size-[34px]" aria-hidden="true">
            <path {...stroke} strokeWidth="3" d="M24.500 2.500A10.500 10.500 0 1 0 31.300 9L25 15.500L20 14.500L18.800 9.500Z" />
            <path {...stroke} strokeWidth="3.400" d="M1.500 33L10 24" />
          </svg>
        </button>
        <span className="ml-[22px] h-10 w-0.5 bg-[#e8e7dd]" />
        <button aria-label="Search steps" className="ml-6">
          <SearchIcon className="size-[34px]" />
        </button>
      </div>
    </div>
  );
}

export default function App() {
  return (
    <div className="flex h-screen flex-col overflow-hidden bg-[#413735] font-['Inter',sans-serif] text-[#201515]">
      <BrowserBar />
      <TabStrip />
      <AppHeader />
      <div className="flex min-h-0 flex-1">
        <SideRail />
        <main className="flex min-w-0 flex-1 flex-col overflow-hidden rounded-tl-2xl bg-[#f8f7f4]">
          <EditorToolbar />
          <div className="relative flex min-h-0 flex-1 justify-end overflow-hidden bg-[#f8f7f4]">
            <DotGrid />
            <div className="absolute -top-8 left-[1181px] w-[592px]">
              {steps.map((step) => (
                <React.Fragment key={step.n}>
                  <StepCard step={step} />
                  <Connector />
                </React.Fragment>
              ))}
            </div>
            <StepPanel />
            <CanvasControls />
            <p className="absolute right-2 bottom-1 text-[20px] text-[#9a9793]">ver. 2025-07-11T12:57-d387dfd3</p>
            <button
              aria-label="Open support chat"
              className="absolute right-12 bottom-12 flex size-28 items-center justify-center rounded-full bg-[#3f4192] text-white shadow-[0_4px_24px_rgba(32,21,21,0.3)]"
            >
              <svg viewBox="0 0 58 58" className="size-[58px]" aria-hidden="true">
                <path fill="currentColor" d="M29 1C13.500 1 1 12 1 26C1 34 5 40.500 11 45C11 49 10 53 7.500 56.500C13.500 56 18 53.500 21 50.300C23.500 50.800 26 51 29 51C44.500 51 57 40 57 26S44.500 1 29 1Z" />
              </svg>
            </button>
          </div>
        </main>
      </div>
    </div>
  );
}
